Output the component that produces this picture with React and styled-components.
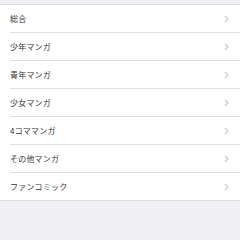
import React from 'react';
import styled, { createGlobalStyle } from 'styled-components';

const Global = createGlobalStyle`
  html, body { margin: 0; padding: 0; background: #efeff4; }
  body { font-family: "Noto Sans CJK JP", "Noto Sans", sans-serif; }
`;

const items = ['総合', '少年マンガ', '青年マンガ', '少女マンガ', '4コママンガ', 'その他マンガ', 'ファンコミック'];

export default function App() {
  return (
    <>
      <Global />
      <Page>
        <List>
          {items.map((label) => (
            <Row key={label}>
              <Label>{label}</Label>
              <Chevron viewBox="0 0 5 8">
                <path d="M1 1 L4 4 L1 7" fill="none" stroke="#c7c7cc" strokeWidth="1.1" />
              </Chevron>
            </Row>
          ))}
        </List>
      </Page>
    </>
  );
}

const Page = styled.div`
  width: 240px;
  height: 240px;
  padding-top: 4px;
  box-sizing: border-box;
  background: #efeff4;
`;

const List = styled.ul`
  margin: 0;
  padding: 0 0 0 10px;
  list-style: none;
  background: #fff;
  border-top: 1px solid #dcdce0;
  border-bottom: 1px solid #dcdce0;
`;

const Row = styled.li`
  height: 27px;
  display: flex;
  align-items: center;
  justify-content: space-between;
  padding-right: 11px;
  border-bottom: 1px solid #e0e0e4;

  &:last-child {
    border-bottom: none;
  }
`;

const Label = styled.span`
  font-size: 8px;
  color: #333;
  letter-spacing: 0.2px;
`;

const Chevron = styled.svg`
  width: 5px;
  height: 8px;
`;
